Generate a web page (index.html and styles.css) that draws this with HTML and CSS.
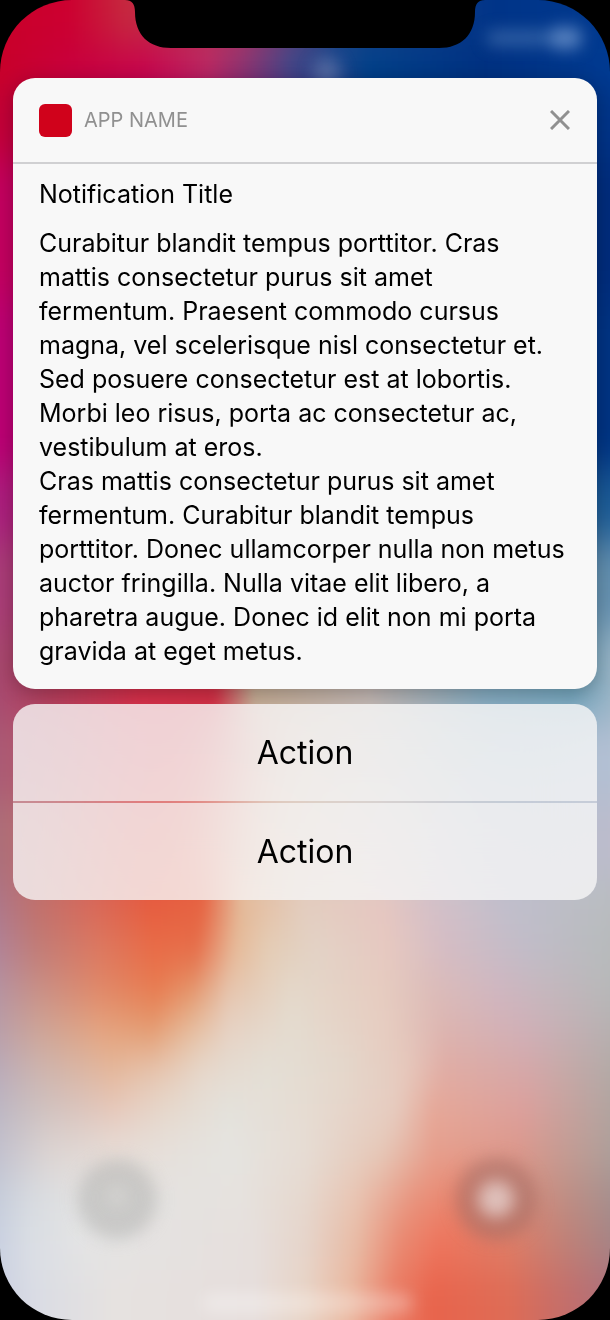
FILE: index.html
```html
<!DOCTYPE html>
<html lang="en">
<head>
  <meta charset="UTF-8">
  <meta name="viewport" content="width=device-width, initial-scale=1.0">
  <title>Notification</title>
  <link rel="stylesheet" href="styles.css">
</head>
<body>
  <div class="screen">
    <!-- blurred lock screen -->
    <svg class="wallpaper" viewBox="0 0 610 1320" preserveAspectRatio="none" aria-hidden="true">
      <defs>
        <filter id="soft" filterUnits="userSpaceOnUse" x="-40" y="-120" width="690" height="1560" color-interpolation-filters="sRGB"><feGaussianBlur stdDeviation="5 20"/></filter>
        <filter id="glow" filterUnits="userSpaceOnUse" x="-40" y="-60" width="690" height="1440" color-interpolation-filters="sRGB"><feGaussianBlur stdDeviation="8"/></filter>
        <linearGradient id="r0"><stop offset="0" stop-color="#c90028"/><stop offset=".13" stop-color="#cc0030"/><stop offset=".22" stop-color="#c6283f"/><stop offset=".4" stop-color="#b03060"/><stop offset=".55" stop-color="#1c4488"/><stop offset=".8" stop-color="#003488"/><stop offset="1" stop-color="#003a90"/></linearGradient>
        <linearGradient id="r1"><stop offset="0" stop-color="#c80024"/><stop offset=".13" stop-color="#c8003c"/><stop offset=".25" stop-color="#c8044c"/><stop offset=".35" stop-color="#bc2c64"/><stop offset=".42" stop-color="#7a3c78"/><stop offset=".48" stop-color="#3c4c8c"/><stop offset=".6" stop-color="#00428a"/><stop offset=".78" stop-color="#003080"/><stop offset="1" stop-color="#003c94"/></linearGradient>
        <linearGradient id="r2"><stop offset="0" stop-color="#c40034"/><stop offset=".3" stop-color="#c00060"/><stop offset=".6" stop-color="#003484"/><stop offset="1" stop-color="#003488"/></linearGradient>
        <linearGradient id="r3"><stop offset="0" stop-color="#c40060"/><stop offset=".3" stop-color="#c00060"/><stop offset=".6" stop-color="#002c78"/><stop offset="1" stop-color="#002c7c"/></linearGradient>
        <linearGradient id="r4"><stop offset="0" stop-color="#be0074"/><stop offset=".3" stop-color="#b00070"/><stop offset=".6" stop-color="#002c78"/><stop offset="1" stop-color="#003484"/></linearGradient>
        <linearGradient id="r5"><stop offset="0" stop-color="#ac2080"/><stop offset=".3" stop-color="#b01068"/><stop offset=".6" stop-color="#205888"/><stop offset="1" stop-color="#1c5c98"/></linearGradient>
        <linearGradient id="r6"><stop offset="0" stop-color="#a8407c"/><stop offset=".3" stop-color="#c02050"/><stop offset=".6" stop-color="#608ca8"/><stop offset="1" stop-color="#6490b0"/></linearGradient>
        <linearGradient id="r7"><stop offset="0" stop-color="#a44c74"/><stop offset=".1" stop-color="#b43c5c"/><stop offset=".24" stop-color="#d42c48"/><stop offset=".36" stop-color="#d02c44"/><stop offset=".42" stop-color="#c0a890"/><stop offset=".6" stop-color="#c0b4b0"/><stop offset=".78" stop-color="#80a8be"/><stop offset=".92" stop-color="#70a4bc"/><stop offset="1" stop-color="#a4b8c8"/></linearGradient>
        <linearGradient id="r8"><stop offset="0" stop-color="#a85c78"/><stop offset=".12" stop-color="#b85464"/><stop offset=".24" stop-color="#d84454"/><stop offset=".35" stop-color="#d84048"/><stop offset=".42" stop-color="#d8bca8"/><stop offset=".6" stop-color="#ccc4c0"/><stop offset=".8" stop-color="#a8bccc"/><stop offset="1" stop-color="#b4c0d4"/></linearGradient>
        <linearGradient id="r9"><stop offset="0" stop-color="#a8707c"/><stop offset=".12" stop-color="#c46868"/><stop offset=".24" stop-color="#e05048"/><stop offset=".34" stop-color="#e45440"/><stop offset=".4" stop-color="#e0c0a8"/><stop offset=".6" stop-color="#d8ccc8"/><stop offset=".8" stop-color="#b8bccc"/><stop offset="1" stop-color="#bcbccc"/></linearGradient>
        <linearGradient id="r10"><stop offset="0" stop-color="#a87890"/><stop offset=".08" stop-color="#c0706c"/><stop offset=".17" stop-color="#d86858"/><stop offset=".26" stop-color="#e65c3e"/><stop offset=".34" stop-color="#e66442"/><stop offset=".4" stop-color="#e4b896"/><stop offset=".5" stop-color="#e4cdbf"/><stop offset=".62" stop-color="#e6c6c0"/><stop offset=".7" stop-color="#d4c0c8"/><stop offset=".82" stop-color="#c0bfcc"/><stop offset="1" stop-color="#b8bcbe"/></linearGradient>
        <linearGradient id="r11"><stop offset="0" stop-color="#ac84a0"/><stop offset=".08" stop-color="#c07c78"/><stop offset=".18" stop-color="#dc7860"/><stop offset=".26" stop-color="#e86c48"/><stop offset=".33" stop-color="#e66c48"/><stop offset=".39" stop-color="#e6b896"/><stop offset=".44" stop-color="#e4ccb4"/><stop offset=".52" stop-color="#e2d2c6"/><stop offset=".63" stop-color="#e6c8c0"/><stop offset=".72" stop-color="#d4bcc4"/><stop offset=".85" stop-color="#c0bcc8"/><stop offset="1" stop-color="#b6baba"/></linearGradient>
        <linearGradient id="r12"><stop offset="0" stop-color="#b094a8"/><stop offset=".08" stop-color="#c89088"/><stop offset=".18" stop-color="#e08868"/><stop offset=".27" stop-color="#e87c50"/><stop offset=".32" stop-color="#e49468"/><stop offset=".38" stop-color="#e6c4ac"/><stop offset=".48" stop-color="#e4d8ca"/><stop offset=".62" stop-color="#e6ccc0"/><stop offset=".7" stop-color="#dcbcb8"/><stop offset=".8" stop-color="#d0b6c0"/><stop offset="1" stop-color="#b4b8b8"/></linearGradient>
        <linearGradient id="r13"><stop offset="0" stop-color="#b49cac"/><stop offset=".08" stop-color="#cca498"/><stop offset=".18" stop-color="#e4a480"/><stop offset=".26" stop-color="#e49c70"/><stop offset=".32" stop-color="#e6bc9c"/><stop offset=".38" stop-color="#e6d2c4"/><stop offset=".48" stop-color="#e4dcd0"/><stop offset=".63" stop-color="#e6ccc0"/><stop offset=".72" stop-color="#dcb4b0"/><stop offset=".84" stop-color="#d0b0b8"/><stop offset="1" stop-color="#b4b0b0"/></linearGradient>
        <linearGradient id="r14"><stop offset="0" stop-color="#b4a8bc"/><stop offset=".08" stop-color="#ccb4b0"/><stop offset=".2" stop-color="#e4b89c"/><stop offset=".28" stop-color="#e6c8b4"/><stop offset=".34" stop-color="#e6d8cc"/><stop offset=".44" stop-color="#e4dfd6"/><stop offset=".56" stop-color="#e4d8cc"/><stop offset=".66" stop-color="#e6c8bc"/><stop offset=".72" stop-color="#e0aca4"/><stop offset=".85" stop-color="#d4a8a8"/><stop offset="1" stop-color="#aeaaa6"/></linearGradient>
        <linearGradient id="r15"><stop offset="0" stop-color="#b8b4c4"/><stop offset=".08" stop-color="#ccc0c0"/><stop offset=".2" stop-color="#e6c8bc"/><stop offset=".28" stop-color="#e6d8cc"/><stop offset=".38" stop-color="#e4e2dc"/><stop offset=".5" stop-color="#e6dcd2"/><stop offset=".64" stop-color="#e6ccc0"/><stop offset=".7" stop-color="#e6a898"/><stop offset=".84" stop-color="#dca09c"/><stop offset="1" stop-color="#aca4a0"/></linearGradient>
        <linearGradient id="r16"><stop offset="0" stop-color="#bcbccc"/><stop offset=".1" stop-color="#dcd4d2"/><stop offset=".2" stop-color="#e6dcd6"/><stop offset=".38" stop-color="#e5e4e0"/><stop offset=".5" stop-color="#e6dcd4"/><stop offset=".62" stop-color="#e6c8b8"/><stop offset=".7" stop-color="#e6a08e"/><stop offset=".83" stop-color="#dc988c"/><stop offset="1" stop-color="#a8a09c"/></linearGradient>
        <linearGradient id="r17"><stop offset="0" stop-color="#c0c8d8"/><stop offset=".07" stop-color="#d6dae0"/><stop offset=".14" stop-color="#e2e2e2"/><stop offset=".4" stop-color="#e6e2de"/><stop offset=".5" stop-color="#e6d8ce"/><stop offset=".58" stop-color="#e8c4b2"/><stop offset=".67" stop-color="#e8947e"/><stop offset=".74" stop-color="#ea846c"/><stop offset=".83" stop-color="#d88c7a"/><stop offset="1" stop-color="#a09090"/></linearGradient>
        <linearGradient id="r18"><stop offset="0" stop-color="#c4cce0"/><stop offset=".07" stop-color="#dadee4"/><stop offset=".16" stop-color="#e4e4e4"/><stop offset=".42" stop-color="#e6dfdc"/><stop offset=".5" stop-color="#e6d4ca"/><stop offset=".58" stop-color="#e8baa4"/><stop offset=".65" stop-color="#ea8870"/><stop offset=".71" stop-color="#ee745c"/><stop offset=".82" stop-color="#de7c66"/><stop offset="1" stop-color="#a08488"/></linearGradient>
        <linearGradient id="r19"><stop offset="0" stop-color="#c8cee2"/><stop offset=".08" stop-color="#dadce4"/><stop offset=".2" stop-color="#e6e2e0"/><stop offset=".42" stop-color="#e6dedc"/><stop offset=".5" stop-color="#e8d4c6"/><stop offset=".57" stop-color="#eab8a0"/><stop offset=".64" stop-color="#ea7c64"/><stop offset=".7" stop-color="#e8644c"/><stop offset=".82" stop-color="#de6c56"/><stop offset="1" stop-color="#a87080"/></linearGradient>
      </defs>
      <g filter="url(#soft)">
        <rect x="-15" y="-120" width="640" height="165" fill="url(#r0)"/>
        <rect x="-15" y="45" width="640" height="45" fill="url(#r1)"/>
        <rect x="-15" y="90" width="640" height="70" fill="url(#r2)"/>
        <rect x="-15" y="160" width="640" height="140" fill="url(#r3)"/>
        <rect x="-15" y="300" width="640" height="170" fill="url(#r4)"/>
        <rect x="-15" y="470" width="640" height="70" fill="url(#r5)"/>
        <rect x="-15" y="540" width="640" height="90" fill="url(#r6)"/>
        <rect x="-15" y="630" width="640" height="90" fill="url(#r7)"/>
        <rect x="-15" y="720" width="640" height="80" fill="url(#r8)"/>
        <rect x="-15" y="800" width="640" height="80" fill="url(#r9)"/>
        <rect x="-15" y="880" width="640" height="45" fill="url(#r10)"/>
        <rect x="-15" y="925" width="640" height="45" fill="url(#r11)"/>
        <rect x="-15" y="970" width="640" height="40" fill="url(#r12)"/>
        <rect x="-15" y="1010" width="640" height="40" fill="url(#r13)"/>
        <rect x="-15" y="1050" width="640" height="40" fill="url(#r14)"/>
        <rect x="-15" y="1090" width="640" height="40" fill="url(#r15)"/>
        <rect x="-15" y="1130" width="640" height="45" fill="url(#r16)"/>
        <rect x="-15" y="1175" width="640" height="45" fill="url(#r17)"/>
        <rect x="-15" y="1220" width="640" height="50" fill="url(#r18)"/>
        <rect x="-15" y="1270" width="640" height="170" fill="url(#r19)"/>
      </g>
      <g filter="url(#glow)">
        <!-- status icons and padlock -->
        <rect x="486" y="30" width="62" height="16" rx="8" fill="#5c88c0" opacity=".5"/>
        <rect x="548" y="27" width="34" height="22" rx="10" fill="#6c94cc" opacity=".8"/>
        <circle cx="327" cy="72" r="14" fill="#8c98c0" opacity=".45"/>
        <!-- torch, camera, home bar -->
        <circle cx="117" cy="1199" r="40" fill="#b8b8b6" opacity=".6"/>
        <circle cx="117" cy="1196" r="9" fill="#e8e8e4" opacity=".4"/>
        <circle cx="496" cy="1199" r="41" fill="#a06c64" opacity=".55"/>
        <circle cx="496" cy="1199" r="18" fill="#e4ccc8" opacity=".85"/>
        <rect x="202" y="1294" width="210" height="18" rx="8" fill="#fff" opacity=".32"/>
      </g>
    </svg>

    <svg class="notch" viewBox="0 0 360 48" aria-hidden="true">
      <path d="M0 0C7 0 10 4 10 12C10 35 24 48 46 48H314C336 48 350 35 350 12C350 4 353 0 360 0Z"/>
    </svg>

    <main class="content">
      <article class="notification">
        <header class="notification-header">
          <span class="app-icon"></span>
          <span class="app-name">APP NAME</span>
          <button class="close" type="button" aria-label="Close">
            <svg viewBox="0 0 20 20" width="20" height="20"><path d="M1 1L19 19M19 1L1 19"/></svg>
          </button>
        </header>
        <div class="notification-body">
          <h1>Notification Title</h1>
          <p>Curabitur blandit tempus porttitor. Cras mattis consectetur purus sit amet fermentum. Praesent commodo cursus magna, vel scelerisque nisl consectetur et. Sed posuere consectetur est at lobortis. Morbi leo risus, porta ac consectetur ac, vestibulum at eros.</p>
          <p>Cras mattis consectetur purus sit amet fermentum. Curabitur blandit tempus porttitor. Donec ullamcorper nulla non metus auctor fringilla. Nulla vitae elit libero, a pharetra augue. Donec id elit non mi porta gravida at eget metus.</p>
        </div>
      </article>

      <div class="actions">
        <button type="button">Action</button>
        <button type="button">Action</button>
      </div>
    </main>
  </div>
</body>
</html>
```
FILE: styles.css
```css
* { box-sizing: border-box; margin: 0; padding: 0; }

body {
  font-family: Inter, "Liberation Sans", sans-serif;
  background: #000;
  color: #000;
}

.screen {
  position: relative;
  min-height: 100vh;
  border-radius: 72px;
  overflow: hidden;
}

.wallpaper {
  position: absolute;
  inset: 0;
  width: 100%;
  height: 100%;
}

.notch {
  position: absolute;
  top: 0;
  left: 50%;
  width: 360px;
  height: 48px;
  transform: translateX(-50%);
}

.content {
  position: relative;
  display: flex;
  flex-direction: column;
  gap: 15px;
  padding: 78px 13px 13px;
}

.notification {
  background: #f8f8f8;
  border-radius: 22px;
  box-shadow: 0 4px 20px rgba(0, 0, 0, 0.25);
  position: relative;
}

.notification-header {
  display: flex;
  align-items: center;
  gap: 12px;
  height: 86px;
  padding: 0 27px 0 26px;
  border-bottom: 2px solid #d0d0d2;
}

.app-icon {
  width: 33px;
  height: 33px;
  border-radius: 6px;
  background: #d0021b;
}

.app-name {
  flex: 1;
  font-size: 20px;
  color: #909090;
}

.close {
  display: flex;
  border: none;
  background: none;
  cursor: pointer;
}

.close path {
  fill: none;
  stroke: #909090;
  stroke-width: 3;
}

.notification-body {
  padding: 13px 26px 21px;
  font-size: 25px;
  line-height: 34px;
}

.notification-body h1 {
  font-size: 25px;
  font-weight: 400;
  margin-bottom: 15px;
}

.actions {
  display: grid;
  gap: 2px;
  border-radius: 22px;
  overflow: hidden;
  background: rgba(240, 240, 240, 0.3);
  backdrop-filter: blur(32px);
}

.actions button {
  height: 97px;
  border: none;
  background: rgba(247, 247, 247, 0.72);
  color: #000;
  font-family: inherit;
  font-size: 32px;
  cursor: pointer;
}
```
